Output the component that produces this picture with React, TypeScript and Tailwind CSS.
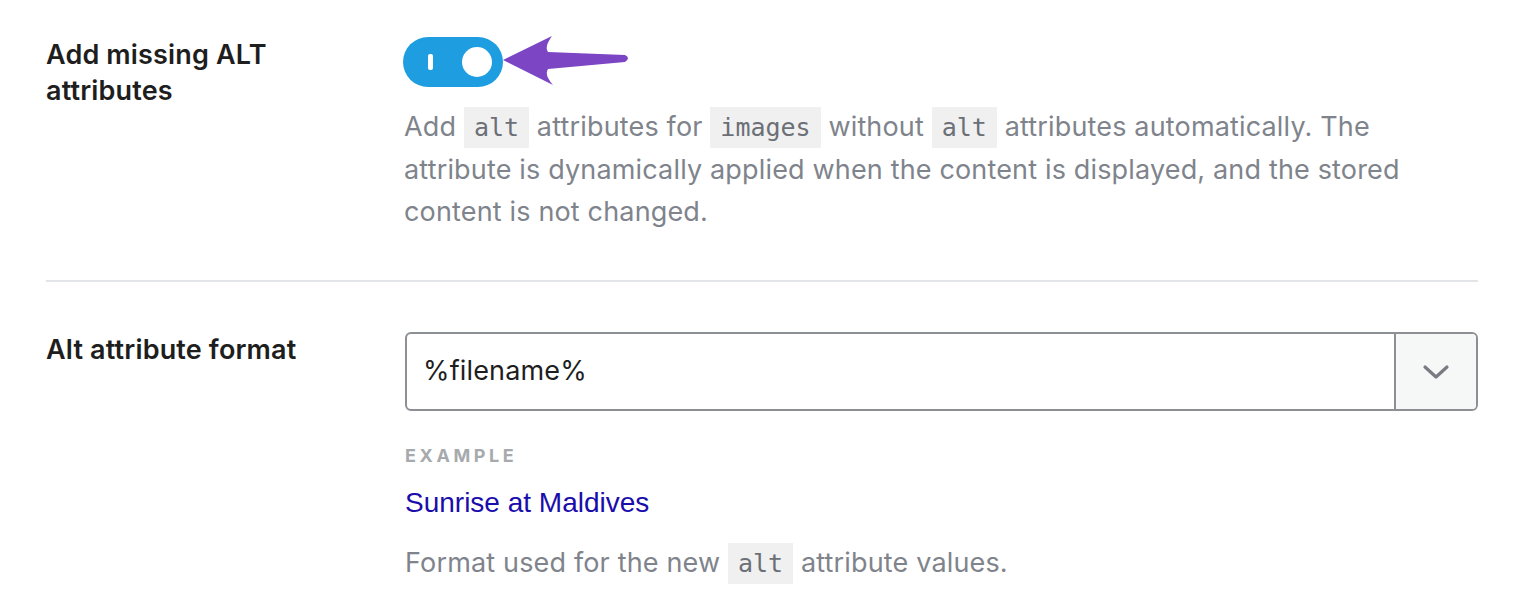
import React from "react";

function Code({ children }: { children: React.ReactNode }) {
  return (
    <code className="bg-[#f0f0f1] px-[10px] py-[6px] font-['DejaVu_Sans_Mono',monospace] text-[25px] tracking-normal text-[#6b6f76]">
      {children}
    </code>
  );
}

function Arrow() {
  return (
    <svg width="130" height="56" viewBox="500 34 130 56" className="-ml-[3px]">
      <path
        d="M503,60 L552,36 Q544,47 548,52 L625,55 Q631,58 625,62 L548,69 Q544,75 553,85 Z"
        fill="#7b45c4"
      />
    </svg>
  );
}

export default function App() {
  return (
    <div className="w-[1521px] h-[609px] overflow-hidden bg-white pl-[46px] pr-[43px] font-['Inter',sans-serif] tracking-[0.01em]">
      {/* row 1 */}
      <div className="flex pt-[35px]">
        <div className="mt-[2px] w-[358px] shrink-0 text-[27px] leading-[36px] font-semibold text-[#1e1e1e]">
          Add missing ALT
          <br />
          attributes
        </div>
        <div className="flex-1">
          <div className="-mt-[1px] flex items-center">
            <div className="ml-[-1px] flex h-[50px] w-[100px] items-center rounded-full bg-[#1e9ee0] px-[11px]">
              <div className="ml-[14px] h-[16px] w-[5px] rounded-[2px] bg-white" />
              <div className="ml-auto h-[30px] w-[30px] rounded-full bg-white" />
            </div>
            <Arrow />
          </div>
          <p className="mt-[16px] text-[27px] leading-[42px] text-[#7f848c]">
            Add <Code>alt</Code> attributes for <Code>images</Code> without <Code>alt</Code> attributes automatically. The
            attribute is dynamically applied when the content is displayed, and the stored content is not changed.
          </p>
        </div>
      </div>

      <div className="mt-[47px] h-[2px] bg-[#e2e4e7]" />

      {/* row 2 */}
      <div className="flex pt-[50px]">
        <div className="w-[359px] shrink-0 text-[27px] leading-[36px] font-semibold text-[#1e1e1e]">
          Alt attribute format
        </div>
        <div className="flex-1">
          <div className="flex h-[79px] overflow-hidden rounded-[6px] border-2 border-[#8c8f94]">
            <div className="flex flex-1 items-center pl-[16px] text-[27px] text-[#1e1e1e]">%filename%</div>
            <div className="flex w-[82px] items-center justify-center border-l-2 border-[#8c8f94] bg-[#f6f7f7]">
              <svg width="28" height="16" viewBox="0 0 28 16" fill="none">
                <path d="M3 3 L14 13 L25 3" stroke="#787c82" strokeWidth="3.2" strokeLinecap="round" strokeLinejoin="round" />
              </svg>
            </div>
          </div>
          <div className="mt-[33px] text-[18px] leading-[24px] font-bold tracking-[0.2em] text-[#a7aaad]">EXAMPLE</div>
          <div className="mt-[17px] font-['Liberation_Sans',sans-serif] text-[28px] leading-[36px] tracking-normal text-[#1a0dab]">
            Sunrise at Maldives
          </div>
          <p className="mt-[21px] text-[27px] leading-[42px] text-[#7f848c]">
            Format used for the new <Code>alt</Code> attribute values.
          </p>
        </div>
      </div>
    </div>
  );
}
